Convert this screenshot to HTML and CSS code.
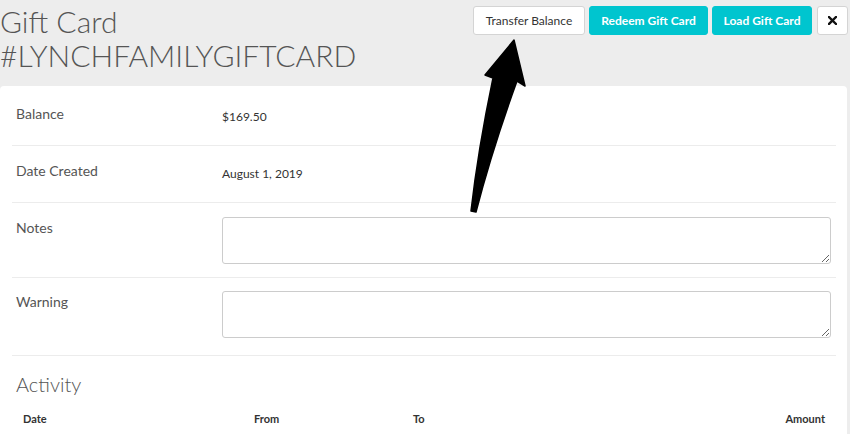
FILE: index.html
```html
<!DOCTYPE html>
<html>
<head>
<meta charset="utf-8">
<link rel="stylesheet" href="styles.css">
</head>
<body>
<div class="page">
  <header class="header">
    <h1 class="title">Gift Card<br>#LYNCHFAMILYGIFTCARD</h1>
    <div class="actions">
      <button class="btn btn-default btn-transfer">Transfer Balance</button>
      <button class="btn btn-primary btn-redeem">Redeem Gift Card</button>
      <button class="btn btn-primary btn-load">Load Gift Card</button>
      <button class="btn btn-default btn-close" aria-label="Close">
        <svg width="9" height="9" viewBox="0 0 9 9"><path d="M1 1 L8 8 M8 1 L1 8" stroke="#111" stroke-width="2.4" stroke-linecap="square"/></svg>
      </button>
    </div>
  </header>
  <main class="card">
    <div class="row row-first">
      <div class="label">Balance</div>
      <div class="value">$169.50</div>
    </div>
    <div class="row">
      <div class="label">Date Created</div>
      <div class="value">August 1, 2019</div>
    </div>
    <div class="row row-field">
      <div class="label">Notes</div>
      <textarea class="field"></textarea>
    </div>
    <div class="row row-field row-last">
      <div class="label">Warning</div>
      <textarea class="field"></textarea>
    </div>
    <h2 class="section-title">Activity</h2>
    <div class="table-head">
      <div>Date</div>
      <div>From</div>
      <div>To</div>
      <div class="right">Amount</div>
    </div>
  </main>
  <svg class="arrow" width="850" height="434" viewBox="0 0 850 434">
    <path d="M471 211 Q478 150 493 78 L485 75 L514 40 L525 86 L517 81 Q492 150 476 212 Z" fill="#000" stroke="#000" stroke-width="1.5" stroke-linejoin="round"/>
  </svg>
</div>
</body>
</html>
```

FILE: styles.css
```css
html, body {
  margin: 0;
  padding: 0;
  background: #ededed;
}
body {
  font-family: Lato, "Open Sans", sans-serif;
  color: #555;
  width: 850px;
  height: 434px;
  overflow: hidden;
}
.page {
  position: relative;
  height: 434px;
}
.header {
  display: flex;
  justify-content: space-between;
  align-items: flex-start;
  height: 86px;
  padding-right: 2px;
}
.title {
  margin: 0;
  padding-top: 4px;
  font-size: 30px;
  line-height: 34px;
  font-weight: 300;
  color: #555;
  letter-spacing: 0;
}
.actions {
  display: flex;
  gap: 4px;
  padding-top: 6px;
}
.btn {
  height: 29px;
  font-family: Lato, sans-serif;
  font-size: 12px;
  border-radius: 3px;
  padding: 0 10px;
  cursor: pointer;
}
.btn-default {
  background: #fff;
  border: 1px solid #d4d4d4;
  color: #333;
}
.btn-transfer {
  width: 112px;
  padding: 0;
}
.btn-primary {
  background: #00c5cf;
  border: 1px solid #00c5cf;
  color: #fff;
  font-weight: 700;
  padding: 0;
}
.btn-redeem {
  width: 119px;
}
.btn-load {
  width: 100px;
}
.btn-close {
  width: 31px;
  padding: 0;
  margin-left: 1px;
  display: flex;
  align-items: center;
  justify-content: center;
}
.card {
  background: #fff;
  width: 847px;
  box-sizing: border-box;
  border-radius: 4px 4px 0 0;
  padding: 0 11px 0 12px;
  height: 348px;
}
.row {
  display: grid;
  grid-template-columns: 206px 1fr;
  align-items: start;
  padding: 15px 5px 21px 4px;
  border-bottom: 1px solid #ececec;
}
.row-first {
  padding-top: 18px;
}
.label {
  font-size: 14px;
  line-height: 20px;
  color: #555;
}
.value {
  font-size: 12px;
  line-height: 14px;
  color: #333;
  padding-top: 6px;
}
.row-field {
  padding-top: 14px;
  padding-bottom: 13px;
}
.row-field .label {
  padding-top: 1px;
}
.row-last {
  padding-top: 13px;
  padding-bottom: 17px;
}
.field {
  display: block;
  box-sizing: border-box;
  width: 100%;
  height: 47px;
  border: 1px solid #ccc;
  border-radius: 3px;
  margin: 0;
  resize: vertical;
  font-family: Lato, sans-serif;
}
.section-title {
  margin: 0;
  padding: 15px 4px 0;
  font-size: 20px;
  line-height: 26px;
  font-weight: 300;
  color: #555;
}
.table-head {
  display: grid;
  grid-template-columns: 231px 159px 1fr auto;
  padding: 14px 11px 0;
  font-size: 11px;
  line-height: 16px;
  font-weight: 700;
  color: #333;
}
.right {
  text-align: right;
}
.arrow {
  position: absolute;
  left: 0;
  top: 0;
  pointer-events: none;
}
```
